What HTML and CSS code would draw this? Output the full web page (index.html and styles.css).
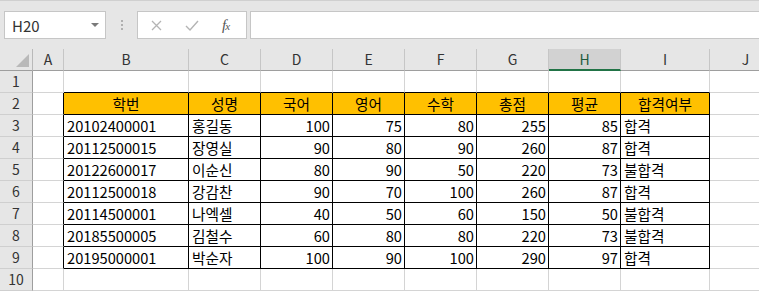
FILE: index.html
```html
<!DOCTYPE html>
<html lang="ko">
<head>
<meta charset="utf-8">
<link rel="stylesheet" href="styles.css">
</head>
<body>
<div class="app">
  <div class="toolbar">
    <div class="namebox"><span class="name">H20</span><span class="caret"></span></div>
    <div class="dots"><i></i><i></i><i></i></div>
    <div class="fxbox">
      <svg class="ico x" width="11" height="11" viewBox="0 0 11 11"><path d="M1 1L10 10M10 1L1 10" stroke="#b4b4b4" stroke-width="1.3" fill="none"/></svg>
      <svg class="ico check" width="14" height="11" viewBox="0 0 14 11"><path d="M1 6L5 10L13 1" stroke="#b4b4b4" stroke-width="1.4" fill="none"/></svg>
      <span class="fx">f<sub>x</sub></span>
    </div>
    <div class="formula"></div>
  </div>
  <div class="sheet">
    <div class="corner"><span class="tri"></span></div>
    <div class="ch">A</div><div class="ch">B</div><div class="ch">C</div><div class="ch">D</div><div class="ch">E</div><div class="ch">F</div><div class="ch">G</div><div class="ch sel">H</div><div class="ch">I</div><div class="ch">J</div>

    <div class="rh">1</div><div class="c"></div><div class="c tb"></div><div class="c tb"></div><div class="c tb"></div><div class="c tb"></div><div class="c tb"></div><div class="c tb"></div><div class="c tb"></div><div class="c tb"></div><div class="c"></div>

    <div class="rh">2</div><div class="c tl"></div><div class="c t h">학번</div><div class="c t h">성명</div><div class="c t h">국어</div><div class="c t h">영어</div><div class="c t h">수학</div><div class="c t h">총점</div><div class="c t h">평균</div><div class="c t h">합격여부</div><div class="c"></div>

    <div class="rh">3</div><div class="c tl"></div><div class="c t l">20102400001</div><div class="c t l">홍길동</div><div class="c t r">100</div><div class="c t r">75</div><div class="c t r">80</div><div class="c t r">255</div><div class="c t r">85</div><div class="c t l">합격</div><div class="c"></div>

    <div class="rh">4</div><div class="c tl"></div><div class="c t l">20112500015</div><div class="c t l">장영실</div><div class="c t r">90</div><div class="c t r">80</div><div class="c t r">90</div><div class="c t r">260</div><div class="c t r">87</div><div class="c t l">합격</div><div class="c"></div>

    <div class="rh">5</div><div class="c tl"></div><div class="c t l">20122600017</div><div class="c t l">이순신</div><div class="c t r">80</div><div class="c t r">90</div><div class="c t r">50</div><div class="c t r">220</div><div class="c t r">73</div><div class="c t l">불합격</div><div class="c"></div>

    <div class="rh">6</div><div class="c tl"></div><div class="c t l">20112500018</div><div class="c t l">강감찬</div><div class="c t r">90</div><div class="c t r">70</div><div class="c t r">100</div><div class="c t r">260</div><div class="c t r">87</div><div class="c t l">합격</div><div class="c"></div>

    <div class="rh">7</div><div class="c tl"></div><div class="c t l">20114500001</div><div class="c t l">나엑셀</div><div class="c t r">40</div><div class="c t r">50</div><div class="c t r">60</div><div class="c t r">150</div><div class="c t r">50</div><div class="c t l">불합격</div><div class="c"></div>

    <div class="rh">8</div><div class="c tl"></div><div class="c t l">20185500005</div><div class="c t l">김철수</div><div class="c t r">60</div><div class="c t r">80</div><div class="c t r">80</div><div class="c t r">220</div><div class="c t r">73</div><div class="c t l">불합격</div><div class="c"></div>

    <div class="rh">9</div><div class="c tl"></div><div class="c t l">20195000001</div><div class="c t l">박순자</div><div class="c t r">100</div><div class="c t r">90</div><div class="c t r">100</div><div class="c t r">290</div><div class="c t r">97</div><div class="c t l">합격</div><div class="c"></div>

    <div class="rh">10</div><div class="c"></div><div class="c"></div><div class="c"></div><div class="c"></div><div class="c"></div><div class="c"></div><div class="c"></div><div class="c"></div><div class="c"></div><div class="c"></div>
  </div>
</div>
</body>
</html>
```
FILE: styles.css
```css
* { box-sizing: border-box; }
html, body { margin: 0; padding: 0; background: #fff; }
body { width: 759px; height: 291px; overflow: hidden; font-family: "Noto Sans CJK KR", "Noto Sans", sans-serif; }

.app { width: 759px; overflow: hidden; }

.toolbar {
  height: 49px;
  background: #e6e6e6;
  border-top: 1px solid #d0d0d0;
  display: flex;
  align-items: flex-start;
  padding: 10px 0 0 4px;
}
.namebox {
  width: 102px; height: 28px;
  background: #fff;
  border: 1px solid #c6c6c6;
  display: flex; align-items: center; justify-content: space-between;
  padding: 0 6px 0 7px;
}
.name { font-size: 15px; color: #333; line-height: 1; }
.caret {
  width: 0; height: 0;
  border-left: 4px solid transparent;
  border-right: 4px solid transparent;
  border-top: 4px solid #7a7a7a;
}
.dots {
  width: 31px; height: 28px;
  display: flex; flex-direction: column; align-items: center; justify-content: center; gap: 2px;
}
.dots i { display: block; width: 2px; height: 2px; background: #b0b0b0; }
.fxbox {
  width: 110px; height: 28px;
  background: #fff;
  border: 1px solid #c6c6c6;
  display: flex; align-items: center;
  padding-left: 13px;
}
.ico.x { margin-right: 23px; }
.ico.check { margin-right: 23px; }
.fx { font-family: "Liberation Serif", serif; font-style: italic; font-size: 15px; color: #555; line-height: 1; }
.fx sub { font-size: 11px; vertical-align: 0; margin-left: -1px; }
.formula {
  flex: 1; height: 28px;
  margin-left: 3px;
  background: #fff;
  border: 1px solid #c6c6c6;
  border-right: none;
}

.sheet {
  width: 854px;
  display: grid;
  grid-template-columns: 33px 31px 125px 72px 72px 72px 72px 72px 72px 89px 72px;
  grid-auto-rows: 22px;
}
.corner {
  background: #e6e6e6;
  border-right: 1px solid #b9b9b9;
  border-bottom: 1px solid #9e9e9e;
  position: relative;
}
.tri {
  position: absolute; right: 3px; bottom: 3px;
  width: 0; height: 0;
  border-left: 13px solid transparent;
  border-bottom: 13px solid #b9b9b9;
}
.ch {
  background: #e6e6e6;
  border-right: 1px solid #c6c6c6;
  border-bottom: 1px solid #9e9e9e;
  text-align: center;
  font-size: 14px; line-height: 21px; color: #333;
}
.ch.sel { background: #d2d2d2; border-bottom: 2px solid #217346; color: #1e5a3c; line-height: 20px; }
.rh {
  background: #e6e6e6;
  border-right: 1px solid #9e9e9e;
  border-bottom: 1px solid #cfcfcf;
  text-align: center;
  font-size: 14px; line-height: 21px; color: #333;
}
.c {
  border-right: 1px solid #d4d4d4;
  border-bottom: 1px solid #d4d4d4;
  font-size: 14.67px; line-height: 21px; color: #000;
  white-space: nowrap; overflow: hidden;
}
.c.tb { border-bottom-color: #000; }
.c.tl { border-right-color: #000; }
.c.t { border-right-color: #000; border-bottom-color: #000; }
.c.h { background: #ffc000; text-align: center; }
.c.l { text-align: left; padding-left: 3px; }
.c.r { text-align: right; padding-right: 2px; }
```
